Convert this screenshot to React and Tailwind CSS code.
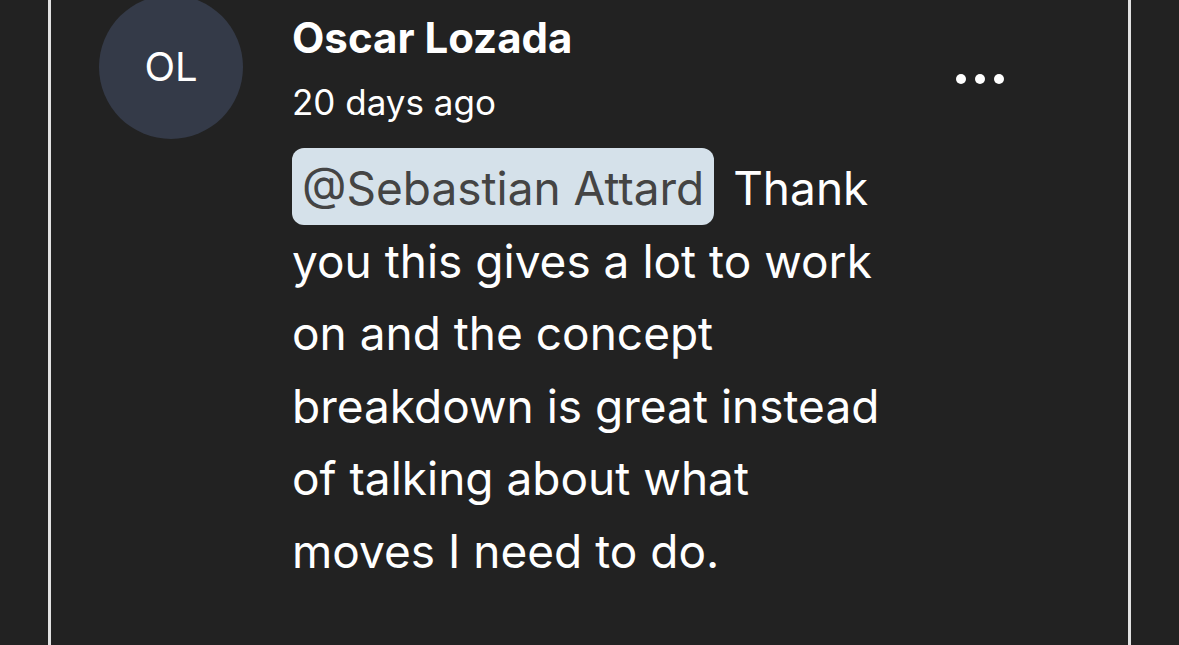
import React from 'react';

const Comment = () => {
  return (
    <div className="flex items-start pl-[48px] pr-[124px]">
      <div className="-mt-[5px] flex h-[144px] w-[144px] shrink-0 items-center justify-center rounded-full bg-[#343a48]">
        <span className="text-[40px] leading-none text-white">OL</span>
      </div>
      <div className="ml-[49px] flex-1">
        <div className="flex items-start justify-between">
          <div>
            <h3 className="mt-[14px] text-[42px] font-bold leading-[48px] text-white">Oscar Lozada</h3>
            <p className="mt-[20px] text-[35px] leading-[40px] text-white">20 days ago</p>
          </div>
          <div className="mt-[74px] flex gap-[9px]">
            <span className="h-[10px] w-[10px] rounded-full bg-white"></span>
            <span className="h-[10px] w-[10px] rounded-full bg-white"></span>
            <span className="h-[10px] w-[10px] rounded-full bg-white"></span>
          </div>
        </div>
        <p className="mt-[30px] max-w-[600px] text-[46px] leading-[72.5px] text-white">
          <span className="mr-[6px] rounded-[12px] bg-[#d5e1ea] px-[10px] pt-[12px] pb-[9px] text-[#444]">@Sebastian Attard</span>{' '}
          Thank you this gives a lot to work on and the concept breakdown is great instead of talking about what moves I need to do.
        </p>
      </div>
    </div>
  );
};

export default function App() {
  return (
    <div className="h-[645px] overflow-hidden bg-[#222222]" style={{ fontFamily: 'Inter, "Noto Sans", sans-serif' }}>
      <div className="mx-[48px] h-full border-x-[3px] border-[#e2e2e2]">
        <Comment />
      </div>
    </div>
  );
}
